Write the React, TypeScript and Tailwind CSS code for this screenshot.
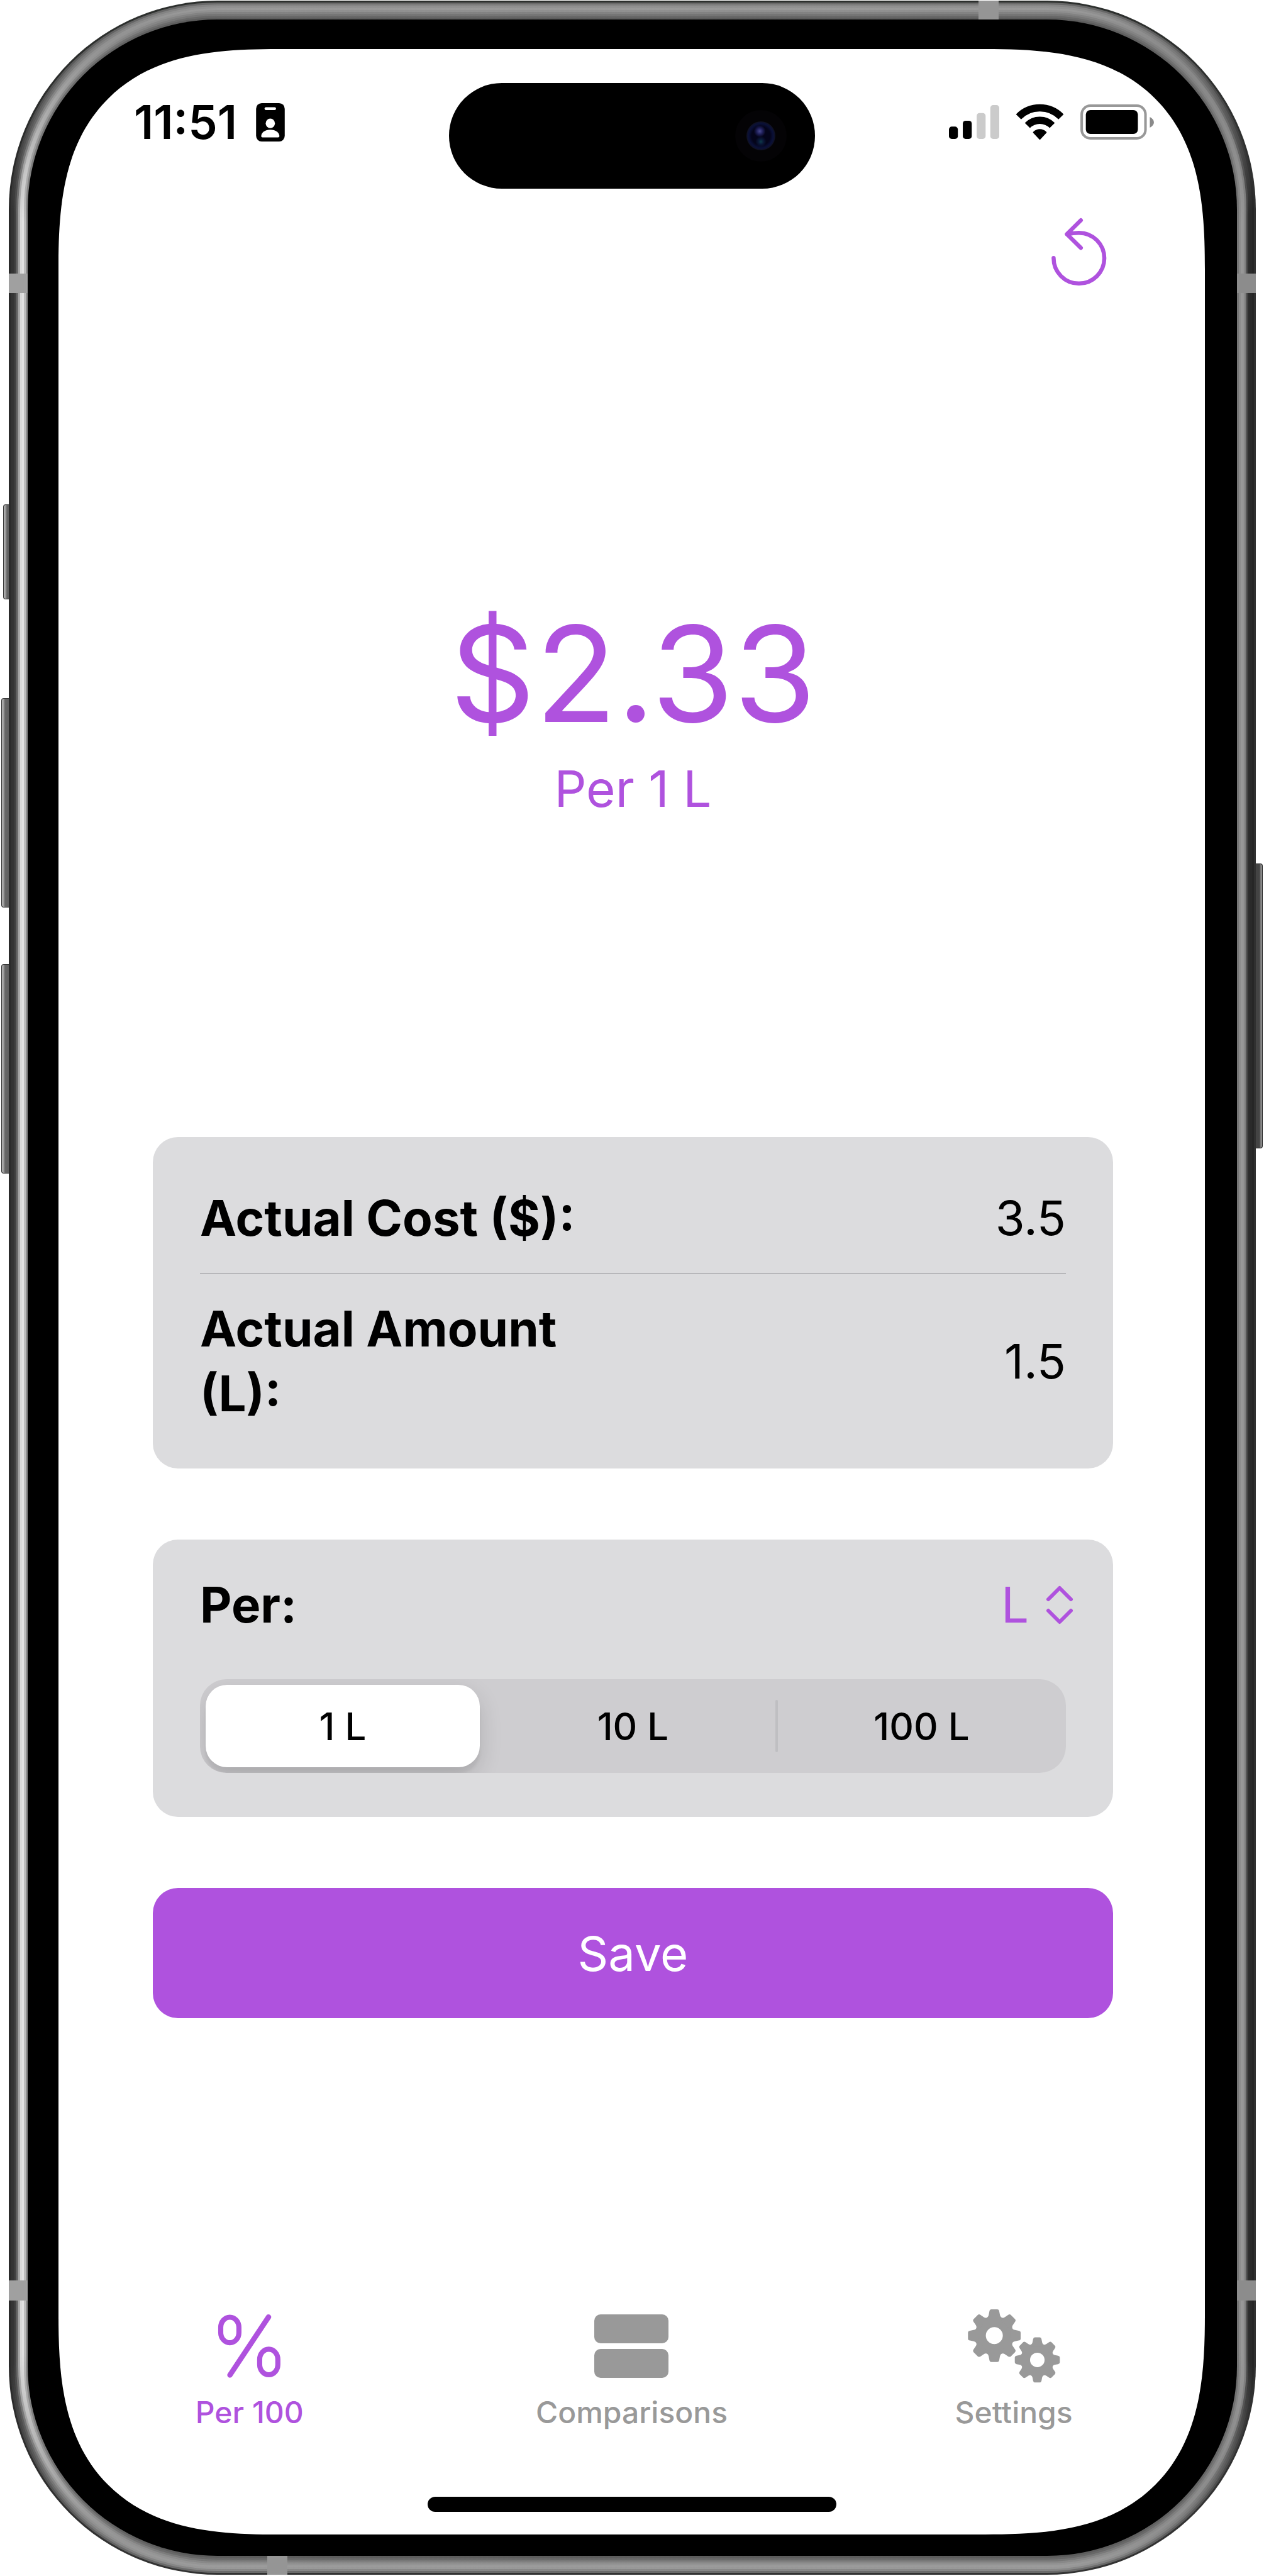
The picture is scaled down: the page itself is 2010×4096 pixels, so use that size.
import { useState, type ReactNode } from "react";

/* Metal band of the phone, from the outer edge inwards. Each ring is 3px thick:
   top/bottom tint fades into the left and right side tints. */
const RINGS = [
  "rounded-[332px] bg-[linear-gradient(to_bottom,#2c2f2d,transparent_330px,transparent_calc(100%-330px),#333),linear-gradient(to_right,#2a2a2a_50%,#303030_50%)]",
  "rounded-[329px] bg-[linear-gradient(to_bottom,#6a6a6a,transparent_330px,transparent_calc(100%-330px),#6c6c6c),linear-gradient(to_right,#333333_50%,#262626_50%)]",
  "rounded-[326px] bg-[linear-gradient(to_bottom,#868686,transparent_330px,transparent_calc(100%-330px),#888),linear-gradient(to_right,#353535_50%,#2a2a2a_50%)]",
  "rounded-[323px] bg-[linear-gradient(to_bottom,#929292,transparent_330px,transparent_calc(100%-330px),#999),linear-gradient(to_right,#434343_50%,#2c2c2c_50%)]",
  "rounded-[320px] bg-[linear-gradient(to_bottom,#999,transparent_330px,transparent_calc(100%-330px),#9c9c9c),linear-gradient(to_right,#6a6a6a_50%,#424242_50%)]",
  "rounded-[317px] bg-[linear-gradient(to_bottom,#909090,transparent_330px,transparent_calc(100%-330px),#949494),linear-gradient(to_right,#a8a8a8_50%,#7c7c7c_50%)]",
  "rounded-[314px] bg-[linear-gradient(to_bottom,#828282,transparent_330px,transparent_calc(100%-330px),#888),linear-gradient(to_right,#d8d8d8_50%,#949494_50%)]",
  "rounded-[311px] bg-[linear-gradient(to_bottom,#767676,transparent_330px,transparent_calc(100%-330px),#777),linear-gradient(to_right,#e0e0e0_50%,#989898_50%)]",
  "rounded-[308px] bg-[linear-gradient(to_bottom,#686868,transparent_330px,transparent_calc(100%-330px),#666),linear-gradient(to_right,#bcbcbc_50%,#8c8c8c_50%)]",
  "rounded-[305px] bg-[linear-gradient(to_bottom,#5c5c5c,transparent_330px,transparent_calc(100%-330px),#5c5c5c),linear-gradient(to_right,#8e8e8e_50%,#767676_50%)]",
];

function MetalBand({ depth = 0, children }: { depth?: number; children: ReactNode }) {
  if (depth === RINGS.length) return <>{children}</>;
  return (
    <div className={`flex grow flex-col p-[3px] ${RINGS[depth]}`}>
      <MetalBand depth={depth + 1}>{children}</MetalBand>
    </div>
  );
}

/* Keys on the edge of the phone and the antenna lines across the band */
const LEFT_KEYS = [
  "-left-[9px] top-[801px] h-[151px] w-[9px]",
  "-left-[12px] top-[1109px] h-[333px] w-[12px]",
  "-left-[12px] top-[1532px] h-[333px] w-[12px]",
];
const ANTENNAS = [
  "left-0 top-[434px] h-[31px] w-[30px] bg-[#a0a0a0]",
  "right-0 top-[434px] h-[31px] w-[30px] bg-[#8c8c8c]",
  "left-0 bottom-[436px] h-[32px] w-[30px] bg-[#a0a0a0]",
  "right-0 bottom-[436px] h-[32px] w-[30px] bg-[#8c8c8c]",
  "right-[409px] top-0 h-[30px] w-[32px] bg-[#959595]",
  "left-[411px] bottom-0 h-[30px] w-[32px] bg-[#959595]",
];

function BadgeIcon() {
  return (
    <svg viewBox="0 0 56 75" className="h-[61px] w-[46px]" aria-hidden="true">
      <rect width="56" height="75" rx="11" />
      <rect x="16.5" y="8" width="22.5" height="5.6" rx="2.8" fill="#fff" />
      <ellipse cx="27.8" cy="39.6" rx="9" ry="9.4" fill="#fff" />
      <path d="M10 64.5C10 57 17.5 51.8 27.8 51.8S45.6 57 45.6 64.5Q45.6 67 43 67H12.6Q10 67 10 64.5Z" fill="#fff" />
    </svg>
  );
}

function SignalIcon() {
  return (
    <svg viewBox="0 0 98 66" className="h-[54px] w-[80px]" aria-hidden="true">
      <rect x="0" y="42" width="17.4" height="24" rx="5.5" />
      <rect x="27" y="30.5" width="17.4" height="35.5" rx="5.5" />
      <rect x="54" y="15.5" width="17.4" height="50.5" rx="5.5" fill="#cbcbcb" />
      <rect x="80.6" y="0" width="17.4" height="66" rx="5.5" fill="#cbcbcb" />
    </svg>
  );
}

function WifiIcon() {
  return (
    <svg viewBox="-47 -66 94 71" className="h-[58px] w-[77px]" fill="none" stroke="#000" aria-hidden="true">
      <path d="M-41.4 -40.6A58 58 0 0 1 41.4 -40.6" strokeWidth="14" />
      <path d="M-24.2 -23.8A34 34 0 0 1 24.2 -23.8" strokeWidth="14" />
      <path d="M0 2.5L-12 -10.3A16.5 16.5 0 0 1 12 -10.3Z" fill="#000" strokeWidth="2.5" strokeLinejoin="round" />
    </svg>
  );
}

function BatteryIcon() {
  return (
    <svg viewBox="0 0 144 69" className="h-[56px] w-[117px]" aria-hidden="true">
      <rect x="2.5" y="2.5" width="125" height="64" rx="17" fill="none" stroke="#989898" strokeWidth="5" />
      <rect x="10.6" y="11" width="102" height="47" rx="9" />
      <path d="M136 24.5C141 27 144 30.5 144 35S141 43 136 45.5Z" fill="#8a8a8a" />
    </svg>
  );
}

function ResetIcon() {
  return (
    <svg viewBox="2052 424 110 138" className="h-[112px] w-[90px]" fill="none" stroke="#af52de" strokeWidth="8" strokeLinecap="round" strokeLinejoin="round" aria-hidden="true">
      <path d="M2057 504.5A49.7 49.7 0 1 0 2106.7 455C2098 455 2091 456 2083.5 458" />
      <path d="M2110.4 430.5L2083 457.5L2110.4 484.5" />
    </svg>
  );
}

function PercentIcon() {
  return (
    <svg viewBox="1050 290 316 320" className="h-[104px] w-[103px]" fill="none" stroke="#af52de" aria-hidden="true">
      <rect x="1068" y="310" width="89" height="125" rx="44.5" ry="50" strokeWidth="25" />
      <rect x="1258.5" y="466.5" width="89" height="125" rx="44.5" ry="50" strokeWidth="25" />
      <path d="M1302 309L1113 593" strokeWidth="26" strokeLinecap="round" />
    </svg>
  );
}

function StackIcon() {
  return (
    <svg viewBox="0 0 118 101" className="h-[101px] w-[118px]" fill="#999" aria-hidden="true">
      <rect width="118" height="46" rx="10" />
      <rect y="55" width="118" height="46" rx="10" />
    </svg>
  );
}

const TOOTH =
  "M-50 -92L-44 -106C-37 -110 -35 -114 -33 -122L-29 -143Q-27 -155 -17 -155H17Q27 -155 29 -143L33 -122C35 -114 37 -110 44 -106L50 -92Z";

function Gear() {
  return (
    <>
      <circle r="79" fill="none" stroke="#999" strokeWidth="58" />
      {[0, 45, 90, 135, 180, 225, 270, 315].map((angle) => (
        <path key={angle} d={TOOTH} transform={`rotate(${angle})`} />
      ))}
    </>
  );
}

function GearsIcon() {
  return (
    <svg viewBox="124 58 544 436" className="h-[118px] w-[147px]" fill="#999" aria-hidden="true">
      <g transform="translate(280 216)">
        <Gear />
      </g>
      <g transform="translate(533 359) scale(.855)">
        <Gear />
      </g>
    </svg>
  );
}

const AMOUNTS = ["1 L", "10 L", "100 L"];

const TABS = [
  { name: "Per 100", icon: <PercentIcon /> },
  { name: "Comparisons", icon: <StackIcon /> },
  { name: "Settings", icon: <GearsIcon /> },
];

export default function App() {
  const [cost, setCost] = useState("3.5");
  const [amount, setAmount] = useState("1.5");
  const [per, setPer] = useState("1 L");
  const [tab, setTab] = useState("Per 100");

  return (
    <div className="flex min-h-screen flex-col bg-white pt-px pr-[13px] pb-[2px] pl-[14px] font-['Inter',sans-serif] text-black">
      <div className="relative flex grow flex-col">
        {LEFT_KEYS.map((place) => (
          <div key={place} className={`absolute rounded-l-[4px] border border-r-0 border-[#333] bg-[linear-gradient(to_right,#aaa_2px,#666_5px,#606060)] ${place}`} />
        ))}
        <div className="absolute -right-[11px] top-[1372px] h-[453px] w-[11px] rounded-r-[4px] border border-l-0 border-[#222] bg-[linear-gradient(to_right,#444_6px,#888_8px)]" />

        <MetalBand>
          <div className="flex grow flex-col rounded-[302px] bg-black pt-[47px] pr-[51px] pb-[34px] pl-[49px]">
            <div className="flex grow flex-col rounded-[350px] bg-white [corner-shape:superellipse(1.44)]">
              <header className="mt-[54px] grid h-[168px] grid-cols-[1fr_582px_1fr]">
                <div className="flex items-center gap-[30px] pb-[44px] pl-[120px]">
                  <span className="text-[74px] leading-none font-semibold">11:51</span>
                  <BadgeIcon />
                </div>
                <div className="flex items-center justify-end rounded-[84px] bg-black pr-[45px]">
                  <div className="flex size-[82px] items-center justify-center rounded-full bg-[#040305]">
                    <div className="size-[46px] rounded-full bg-[radial-gradient(circle_at_46%_34%,#4a4a92_0,#20205a_12%,transparent_24%),radial-gradient(circle_at_50%_70%,#0d3c48_0,#0a1838_10%,transparent_22%),radial-gradient(circle,#04041a_45%,#0a1038_60%,#11111c_72%)]" />
                  </div>
                </div>
                <div className="flex items-center justify-end gap-[26px] pr-[81px] pb-[44px]">
                  <SignalIcon />
                  <WifiIcon />
                  <BatteryIcon />
                </div>
              </header>

              <main className="flex grow flex-col pr-[146px] pl-[150px]">
                <button type="button" aria-label="Reset" className="mt-[45px] mr-[9px] self-end">
                  <ResetIcon />
                </button>

                <section className="flex flex-col items-center gap-[37px] pt-[508px] pb-[514px] text-[#af52de]">
                  <p className="text-[212px] leading-none">$2.33</p>
                  <p className="text-[80px] leading-none">Per 1 L</p>
                </section>

                <section className="rounded-[40px] bg-[#dcdcde] px-[75px] pt-[77px] pb-[68px] text-[78px] leading-[103px]">
                  <div className="flex items-center justify-between border-b-2 border-[#b7b7ba] pb-[36px]">
                    <label htmlFor="cost" className="w-1/2 font-bold">Actual Cost ($):</label>
                    <input id="cost" inputMode="decimal" value={cost} onChange={(e) => setCost(e.target.value)} className="h-[103px] w-1/3 bg-transparent text-right text-[76px] outline-none" />
                  </div>
                  <div className="flex items-center justify-between pt-[35px]">
                    <label htmlFor="amount" className="w-1/2 font-bold">Actual Amount (L):</label>
                    <input id="amount" inputMode="decimal" value={amount} onChange={(e) => setAmount(e.target.value)} className="h-[103px] w-1/3 bg-transparent text-right text-[76px] outline-none" />
                  </div>
                </section>

                <section className="mt-[113px] rounded-[40px] bg-[#dcdcde] px-[75px] pt-[52px] pb-[70px]">
                  <div className="flex items-center justify-between text-[78px] leading-[103px]">
                    <label htmlFor="unit" className="font-bold">Per:</label>
                    <div className="-mr-[12px] flex items-center gap-[26px] text-[#af52de]">
                      <select id="unit" className="h-[103px] appearance-none bg-transparent outline-none">
                        <option>L</option>
                      </select>
                      <svg viewBox="0 0 44 62" className="h-[62px] w-[44px]" fill="none" stroke="currentColor" strokeWidth="6" strokeLinecap="round" strokeLinejoin="round" aria-hidden="true">
                        <path d="M4 22L22 4L40 22M4 40L22 58L40 40" />
                      </svg>
                    </div>
                  </div>
                  <div role="radiogroup" aria-label="Amount to compare" className="mt-[67px] grid h-[149px] grid-cols-3 overflow-hidden rounded-[42px] bg-[#cecdd0] text-[60px] font-medium">
                    {AMOUNTS.map((option, i) => (
                      <label
                        key={option}
                        className={
                          per === option
                            ? "relative my-[9px] mr-[14px] ml-[9px] flex items-center justify-center rounded-[34px] bg-white shadow-[0_14px_36px_rgba(0,0,0,0.14),0_10px_4px_rgba(0,0,0,0.05)]"
                            : "relative flex items-center justify-center"
                        }
                      >
                        {i === 2 && <span className="absolute top-[33px] bottom-[33px] -left-[3px] w-[4px] rounded-full bg-[#bfbfc2]" />}
                        <input type="radio" name="per" value={option} checked={per === option} onChange={() => setPer(option)} className="sr-only" />
                        {option}
                      </label>
                    ))}
                  </div>
                </section>

                <button type="button" className="mt-[113px] h-[207px] rounded-[40px] bg-[#af52de] text-[76px] text-white">
                  Save
                </button>
              </main>

              <nav className="grid grid-cols-3 pb-[106px]">
                {TABS.map(({ name, icon }) => (
                  <button
                    key={name}
                    type="button"
                    aria-current={tab === name ? "page" : undefined}
                    onClick={() => setTab(name)}
                    className={`flex flex-col items-center gap-[19px] text-[48px] leading-[56px] font-medium ${tab === name ? "text-[#af52de]" : "text-[#999]"}`}
                  >
                    <span className="flex h-[118px] items-center">{icon}</span>
                    {name}
                  </button>
                ))}
              </nav>
              <div className="mb-[36px] h-[24px] w-[650px] self-center rounded-full bg-black" />
            </div>
          </div>
        </MetalBand>

        {ANTENNAS.map((place) => (
          <div key={place} className={`absolute ${place}`} />
        ))}
      </div>
    </div>
  );
}
